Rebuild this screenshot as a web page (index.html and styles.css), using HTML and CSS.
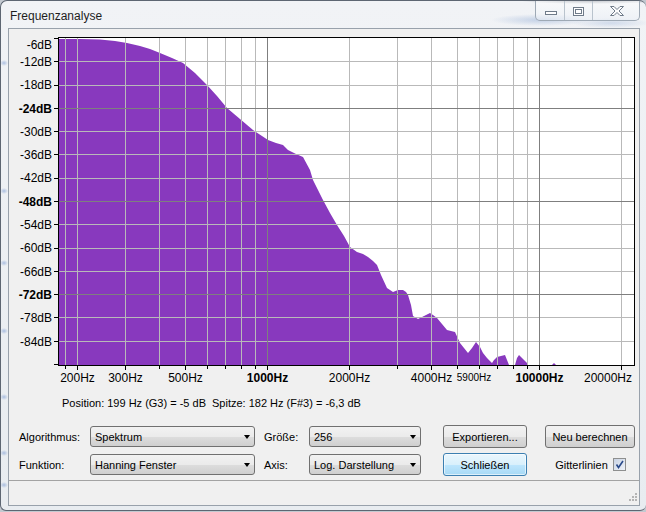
FILE: index.html
```html
<!DOCTYPE html>
<html lang="de">
<head>
  <meta charset="UTF-8" />
  <title>Frequenzanalyse</title>
  <link rel="stylesheet" href="styles.css">
</head>
<body>

  <div class="window">
    <div class="titlebar">
      <span class="title">Frequenzanalyse</span>
      <div class="caption-btns">
        <div class="cap cap-min">
          <svg width="28" height="20"><rect x="9.5" y="11.5" width="11" height="3" /></svg>
        </div>
        <div class="cap cap-max">
          <svg width="27" height="20"><rect x="8.5" y="7.5" width="10" height="8" /><rect x="10.5" y="9.5" width="6" height="4" /></svg>
        </div>
        <div class="cap cap-close">
          <svg width="46" height="20"><polygon points="17.5,6.5 21,6.5 24,9.5 27,6.5 30.5,6.5 26,11 30.5,15.5 27,15.5 24,12.5 21,15.5 17.5,15.5 22,11" /></svg>
        </div>
      </div>
    </div>

    <div class="client">
      <!-- spectrum plot, drawn in page coordinates -->
      <svg class="plot" width="630" height="363" viewBox="9 29 630 363">
        <rect class="plot-bg" x="58" y="37" width="577" height="329" />

        <polygon class="spectrum" points="59,365 59,39 80,39 100,39.5 115,41 127,43 140,46 150,49 160,53 172,58 183,63 195,73 207,85 217,96 227,108 240,119 253,130 262,136 268,140 276,143 283,145 288,150 296,154 303,157 310,170 313,180 318,190 323,200 330,213 337,225 344,236 350,247 357,252 363,254 368,257 373,261 377,265 381,275 387,288 393,292 398,290 403,290 406,292 408,295 411,305 413,316 418,319 424,316 430,313 433,315 437,318 442,324 447,330 451,331 455,332 460,343 464,348 468,353 472,348 476,342 480,347 483,353 487,358 492,363 494,360 497,357 501,356 505,355 507,360 509,365 515,365 517,358 519,355 523,359 527,363 528,365" />
        <polygon class="spectrum" points="552,365 554,363 556,365" />

        <path class="grid" d="M65.5 38V365M77.5 38V365M125.5 38V365M159.5 38V365M185.5 38V365M207.5 38V365M225.5 38V365M241.5 38V365M255.5 38V365M349.5 38V365M397.5 38V365M431.5 38V365M457.5 38V365M479.5 38V365M497.5 38V365M513.5 38V365M527.5 38V365M621.5 38V365
          M59 61.5H634M59 85.5H634M59 131.5H634M59 154.5H634M59 178.5H634M59 224.5H634M59 248.5H634M59 271.5H634M59 317.5H634M59 341.5H634" />
        <path class="grid-major" d="M267.5 38V365M539.5 38V365M59 108.5H634M59 201.5H634M59 294.5H634" />

        <rect class="frame" x="58.5" y="37.5" width="576" height="328" />

        <path class="tick" d="M54 38.5H58M54 61.5H58M54 85.5H58M54 108.5H58M54 131.5H58M54 154.5H58M54 178.5H58M54 201.5H58M54 224.5H58M54 248.5H58M54 271.5H58M54 294.5H58M54 317.5H58M54 341.5H58M54 364.5H58
          M65.5 366V369M77.5 366V370M125.5 366V370M159.5 366V369M185.5 366V370M207.5 366V369M225.5 366V369M241.5 366V369M255.5 366V369M267.5 366V370M349.5 366V370M397.5 366V369M431.5 366V370M457.5 366V369M479.5 366V369M497.5 366V369M513.5 366V369M527.5 366V369M539.5 366V370M621.5 366V370" />

        <g class="ylabels">
          <text x="52" y="49">-6dB</text>
          <text x="52" y="66">-12dB</text>
          <text x="52" y="89">-18dB</text>
          <text x="52" y="112.5" class="bold">-24dB</text>
          <text x="52" y="135.5">-30dB</text>
          <text x="52" y="159">-36dB</text>
          <text x="52" y="182">-42dB</text>
          <text x="52" y="205.5" class="bold">-48dB</text>
          <text x="52" y="228.5">-54dB</text>
          <text x="52" y="252">-60dB</text>
          <text x="52" y="275.5">-66dB</text>
          <text x="52" y="298.5" class="bold">-72dB</text>
          <text x="52" y="322">-78dB</text>
          <text x="52" y="345.5">-84dB</text>
        </g>

        <g class="xlabels">
          <text x="77.5" y="382">200Hz</text>
          <text x="125.5" y="382">300Hz</text>
          <text x="185.5" y="382">500Hz</text>
          <text x="267.5" y="382" class="bold">1000Hz</text>
          <text x="349.5" y="382">2000Hz</text>
          <text x="431.5" y="382">4000Hz</text>
          <text x="474" y="381" class="small">5900Hz</text>
          <text x="539.5" y="382" class="bold">10000Hz</text>
          <text x="632" y="382" class="end">20000Hz</text>
        </g>
      </svg>

      <div class="readout">
        <span class="readout-pos">Position: 199 Hz (G3) = -5 dB</span>
        <span>Spitze: 182 Hz (F#3) = -6,3 dB</span>
      </div>

      <div class="controls">
        <span class="lbl">Algorithmus:</span>
        <div class="combo combo-wide"><span>Spektrum</span><span class="arrow"></span></div>
        <span class="lbl">Größe:</span>
        <div class="combo"><span>256</span><span class="arrow"></span></div>
        <button class="btn btn-export">Exportieren...</button>
        <button class="btn btn-recalc">Neu berechnen</button>

        <span class="lbl">Funktion:</span>
        <div class="combo combo-wide"><span>Hanning Fenster</span><span class="arrow"></span></div>
        <span class="lbl">Axis:</span>
        <div class="combo"><span>Log. Darstellung</span><span class="arrow"></span></div>
        <button class="btn btn-export btn-default">Schließen</button>
        <div class="grid-toggle">
          Gitterlinien
          <span class="checkbox">
            <svg width="11" height="11"><path d="M2.5 5.5L4.5 8.5L9 2" /></svg>
          </span>
        </div>
      </div>

      <div class="statusbar">
        <svg class="grip" width="12" height="12">
          <rect x="9" y="1" width="2" height="2" />
          <rect x="6" y="4" width="2" height="2" />
          <rect x="9" y="4" width="2" height="2" />
          <rect x="3" y="7" width="2" height="2" />
          <rect x="6" y="7" width="2" height="2" />
          <rect x="9" y="7" width="2" height="2" />
        </svg>
      </div>
    </div>
  </div>

</body>
</html>
```

FILE: styles.css
```css
body {
  margin: 0;
  background: #c3c9d0;
  font-family: "Liberation Sans", Arial, sans-serif;
  font-size: 11px;
  color: #000;
}

.window {
  width: 646px;
  height: 511px;
  box-sizing: border-box;
  border: 1px solid #5d6672;
  border-right: none;
  border-radius: 7px 7px 6px 6px;
  overflow: hidden;
  display: flex;
  flex-direction: column;
  background:
    radial-gradient(4px 3px at 3px 62px, rgba(90,130,200,0.45), transparent),
    radial-gradient(4px 3px at 3px 190px, rgba(90,130,200,0.45), transparent),
    radial-gradient(4px 3px at 3px 262px, rgba(90,130,200,0.45), transparent),
    radial-gradient(4px 3px at 3px 330px, rgba(90,130,200,0.45), transparent),
    radial-gradient(4px 3px at 3px 396px, rgba(90,130,200,0.45), transparent),
    radial-gradient(4px 3px at 3px 452px, rgba(90,130,200,0.45), transparent),
    radial-gradient(4px 3px at 3px 484px, rgba(90,130,200,0.45), transparent),
    linear-gradient(#f1f3f6, #e8ecf0);
}

/* title bar */
.titlebar {
  height: 27px;
  flex-shrink: 0;
  display: flex;
  justify-content: space-between;
  align-items: flex-start;
  background:
    radial-gradient(50px 6px at 540px 19px, rgba(110,145,200,0.35), transparent),
    radial-gradient(40px 5px at 610px 22px, rgba(110,145,200,0.25), transparent),
    radial-gradient(70px 3px at 590px 0px, rgba(50,60,80,0.55), transparent);
}

.title {
  padding: 7px 0 0 9px;
  line-height: 16px;
  font-size: 12px;
  color: #1e1e1e;
}

.caption-btns {
  display: flex;
  margin: -1px 6px 0 0;
  border: 1px solid #9ea9b5;
  border-top: none;
  border-radius: 0 0 5px 5px;
  background: linear-gradient(rgba(255,255,255,0.55), rgba(235,240,246,0.6));
  overflow: hidden;
}

.cap {
  height: 20px;
}

.cap + .cap {
  border-left: 1px solid #b9c3cd;
}

.cap svg {
  display: block;
}

.cap rect,
.cap polygon {
  fill: #fdfdfe;
  stroke: #6f7b89;
  stroke-width: 1;
}

/* client area */
.client {
  margin-left: 7px;
  width: 632px;
  height: 478px;
  box-sizing: border-box;
  border: 1px solid #98a1ab;
  background: #f0f0f0;
  display: flex;
  flex-direction: column;
}

.plot {
  display: block;
  flex-shrink: 0;
}

.plot-bg {
  fill: #fff;
}

.spectrum {
  fill: #8839be;
}

.grid {
  fill: none;
  stroke: #b9b9b9;
  stroke-width: 1;
}

.grid-major {
  fill: none;
  stroke: #7f7f7f;
  stroke-width: 1;
}

.frame {
  fill: none;
  stroke: #000;
  stroke-width: 1;
}

.tick {
  fill: none;
  stroke: #000;
  stroke-width: 1;
}

.plot text {
  font-family: "Liberation Sans", Arial, sans-serif;
  font-size: 12px;
  fill: #000;
}

.ylabels text {
  text-anchor: end;
}

.xlabels text {
  text-anchor: middle;
}

.plot text.bold {
  font-weight: bold;
}

.plot text.small {
  font-size: 10px;
}

.plot text.end {
  text-anchor: end;
}

.readout {
  height: 22px;
  line-height: 22px;
  padding-left: 53px;
  display: flex;
  white-space: nowrap;
}

.readout-pos {
  width: 150px;
}

/* controls */
.controls {
  margin-top: 11px;
  padding-left: 10px;
  display: grid;
  grid-template-columns: 71px 174px 45px 134px 102px 90px;
  grid-template-rows: 23px 23px;
  row-gap: 5px;
  align-items: center;
}

.combo {
  width: 112px;
  height: 21px;
  box-sizing: border-box;
  border: 1px solid #707070;
  border-radius: 3px;
  background: linear-gradient(#f2f2f2 0%, #ebebeb 50%, #dddddd 51%, #cfcfcf 100%);
  display: flex;
  justify-content: space-between;
  align-items: center;
  padding: 0 4px 0 4px;
}

.combo-wide {
  width: 165px;
}

.arrow {
  width: 0;
  height: 0;
  border-left: 3.5px solid transparent;
  border-right: 3.5px solid transparent;
  border-top: 4px solid #000;
  margin-right: 0;
}

.btn {
  height: 23px;
  margin: 0;
  padding: 0;
  border: 1px solid #707070;
  border-radius: 3px;
  background: linear-gradient(#f2f2f2 0%, #ebebeb 50%, #dddddd 51%, #cfcfcf 100%);
  font: 11px "Liberation Sans", Arial, sans-serif;
  color: #000;
}

.btn-export {
  width: 84px;
}

.btn-recalc {
  width: 90px;
}

.btn-default {
  border-color: #3c7fb1;
  background: linear-gradient(#eaf6fd 0%, #d9f0fc 50%, #bee6fd 51%, #a7d9f5 100%);
  box-shadow: inset 0 0 0 1px rgba(255,255,255,0.6);
}

.grid-toggle {
  display: flex;
  justify-content: center;
  align-items: center;
  gap: 5px;
  padding-left: 1px;
}

.checkbox {
  width: 13px;
  height: 13px;
  box-sizing: border-box;
  border: 1px solid #8e8f8f;
  background: linear-gradient(135deg, #c9d3e3, #eef2f8);
  display: flex;
  align-items: center;
  justify-content: center;
}

.checkbox svg {
  display: block;
}

.checkbox path {
  fill: none;
  stroke: #2a4a8a;
  stroke-width: 1.6;
}

/* status bar */
.statusbar {
  margin-top: auto;
  height: 25px;
  box-sizing: border-box;
  border-top: 1px solid #a3a3a3;
  display: flex;
  justify-content: flex-end;
  align-items: flex-end;
}

.grip {
  display: block;
  margin: 0 1px 1px 0;
}

.grip rect {
  fill: #b4b4b4;
}
```
